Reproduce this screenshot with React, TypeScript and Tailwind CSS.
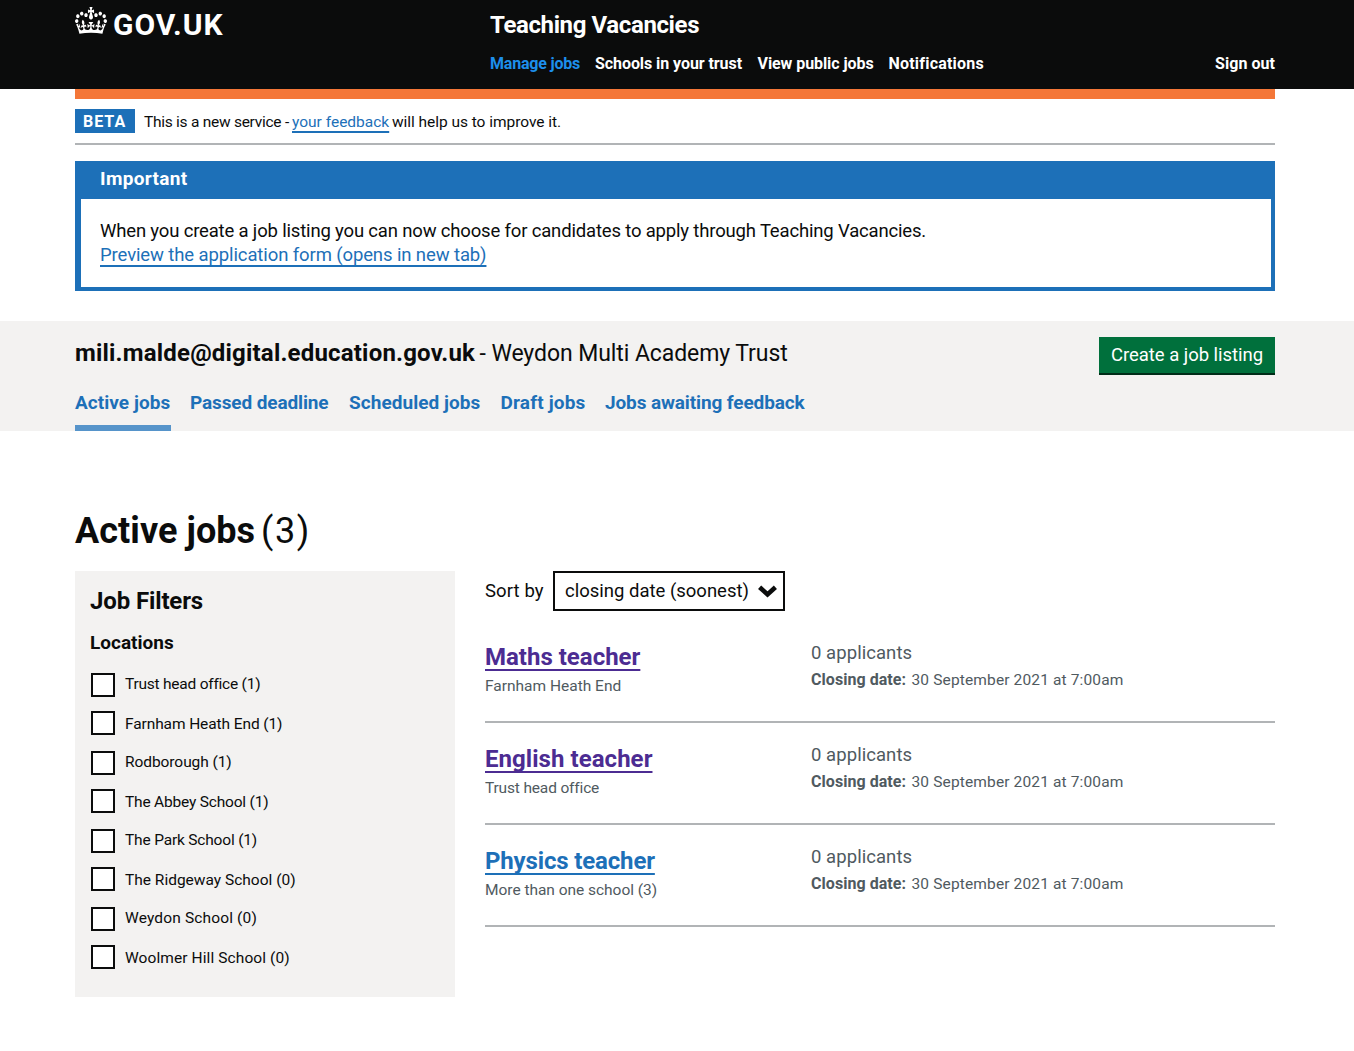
import React from 'react';

const navLinks = [
  { label: 'Manage jobs', cls: 'w-[105px] tracking-[-0.2px] text-[#1d8feb]' },
  { label: 'Schools in your trust', cls: 'w-[162.5px] tracking-[-0.07px]' },
  { label: 'View public jobs', cls: 'w-[131px] tracking-[-0.07px]' },
  { label: 'Notifications', cls: 'w-[110px] tracking-[0.2px]' },
];

const tabs = [
  { label: 'Active jobs', cls: 'w-[96px] mr-[19px] tracking-[0.05px] border-[#5694ca]' },
  { label: 'Passed deadline', cls: 'w-[139px] mr-[20px] tracking-[-0.12px] border-transparent' },
  { label: 'Scheduled jobs', cls: 'w-[132px] mr-[19.5px] tracking-[0.05px] border-transparent' },
  { label: 'Draft jobs', cls: 'w-[85px] mr-[19.5px] tracking-[0.17px] border-transparent' },
  { label: 'Jobs awaiting feedback', cls: 'tracking-[-0.12px] border-transparent' },
];

const locations = [
  { label: 'Trust head office (1)', tracking: 'tracking-[-0.23px]' },
  { label: 'Farnham Heath End (1)', tracking: 'tracking-[-0.1px]' },
  { label: 'Rodborough (1)', tracking: 'tracking-[-0.07px]' },
  { label: 'The Abbey School (1)', tracking: 'tracking-[-0.19px]' },
  { label: 'The Park School (1)', tracking: 'tracking-[-0.18px]' },
  { label: 'The Ridgeway School (0)', tracking: 'tracking-[0px]' },
  { label: 'Weydon School (0)', tracking: 'tracking-[0.15px]' },
  { label: 'Woolmer Hill School (0)', tracking: 'tracking-[0.09px]' },
];

const jobs = [
  { title: 'Maths teacher', place: 'Farnham Heath End', color: 'text-[#4c2c92]', placeTracking: 'tracking-[0px]' },
  { title: 'English teacher', place: 'Trust head office', color: 'text-[#4c2c92] tracking-[0.05px]', placeTracking: 'tracking-[-0.16px]' },
  { title: 'Physics teacher', place: 'More than one school (3)', color: 'text-[#1d70b8] tracking-[-0.15px]', placeTracking: 'tracking-[-0.03px]' },
];

const linkLine = 'underline decoration-2 underline-offset-4 [text-decoration-skip-ink:none]';

function Crown() {
  return (
    <svg className="h-[27px] w-8 shrink-0" viewBox="0 0 132 97" preserveAspectRatio="none" fill="currentColor" aria-hidden="true">
      <path
        fillRule="evenodd"
        d="M25 30.2c3.5 1.5 7.7-.2 9.1-3.7 1.5-3.6-.2-7.8-3.9-9.2-3.6-1.4-7.6.3-9.1 3.9-1.4 3.5.3 7.5 3.9 9zM9 39.5c3.6 1.5 7.8-.2 9.2-3.7 1.5-3.6-.2-7.8-3.9-9.1-3.6-1.5-7.6.2-9.1 3.8-1.4 3.5.3 7.5 3.8 9zM4.4 57.2c3.5 1.5 7.7-.2 9.1-3.8 1.5-3.6-.2-7.7-3.9-9.1-3.5-1.5-7.6.3-9.1 3.8-1.4 3.5.3 7.6 3.9 9.1zm38.3-21.4c3.5 1.5 7.7-.2 9.1-3.8 1.5-3.6-.2-7.7-3.9-9.1-3.6-1.5-7.6.3-9.1 3.8-1.3 3.6.4 7.7 3.9 9.1zm64.4-5.6c-3.6 1.5-7.8-.2-9.1-3.7-1.5-3.6.2-7.8 3.8-9.2 3.6-1.4 7.7.3 9.2 3.9 1.3 3.5-.4 7.5-3.9 9zm15.9 9.3c-3.6 1.5-7.7-.2-9.1-3.7-1.5-3.6.2-7.8 3.7-9.1 3.6-1.5 7.7.2 9.2 3.8 1.5 3.5-.3 7.5-3.8 9zm4.7 17.7c-3.6 1.5-7.8-.2-9.2-3.8-1.5-3.6.2-7.7 3.9-9.1 3.6-1.5 7.7.3 9.2 3.8 1.3 3.5-.4 7.6-3.9 9.1zM89.3 35.8c-3.6 1.5-7.8-.2-9.2-3.8-1.4-3.6.2-7.7 3.9-9.1 3.6-1.5 7.7.3 9.2 3.8 1.4 3.6-.3 7.7-3.9 9.1zM69.7 17.7l8.9 4.7V9.3l-8.9 2.8c-.2-.3-.5-.6-.9-.9L72.4 0H59.6l3.5 11.2c-.3.3-.6.5-.9.9l-8.8-2.8v13.1l8.8-4.7c.3.3.6.7.9.9l-5 15.4v.1c-.2.8-.4 1.6-.4 2.4 0 4.1 3.1 7.5 7 8.1h.2c.3 0 .7.1 1 .1.4 0 .7 0 1-.1h.2c4-.6 7.1-4.1 7.1-8.1 0-.8-.1-1.7-.4-2.4V34l-5.1-15.4c.4-.2.7-.6 1-.9zM66 92.8c16.9 0 32.8 1.1 47.1 3.2 4-16.9 8.9-26.7 14-33.5l-9.6-3.4c1 4.9 1.1 7.2 0 10.2-1.5-1.4-3-4.3-4.2-8.7L108.6 76c2.8-2 5-3.2 7.5-3.3-4.4 9.4-10 11.9-13.6 11.2-4.3-.8-6.3-4.6-5.6-7.9 1-4.7 5.7-5.9 8-.5 4.3-8.7-3-11.4-7.6-8.8 7.1-7.2 7.9-13.5 2.1-21.1-8 6.1-8.1 12.3-4.5 20.8-4.7-5.4-12.1-2.5-9.5 6.2 3.4-5.2 7.9-2 7.2 3.1-.6 4.3-6.4 7.8-13.5 7.2-10.3-.9-10.9-8-11.2-13.8 2.5-.5 7.1 1.8 11 7.3L80.2 60c-4.1 4.4-8 5.3-12.3 5.4 1.4-4.4 8-11.6 8-11.6H55.5s6.4 7.2 7.9 11.6c-4.2-.1-8-1-12.3-5.4l1.4 16.4c3.9-5.5 8.5-7.7 10.9-7.3-.3 5.8-.9 12.8-11.1 13.8-7.2.6-12.9-2.9-13.5-7.2-.7-5 3.8-8.3 7.1-3.1 2.7-8.7-4.6-11.6-9.4-6.2 3.7-8.5 3.6-14.7-4.6-20.8-5.8 7.6-5 13.9 2.2 21.1-4.7-2.6-11.9.1-7.7 8.8 2.3-5.5 7.1-4.2 8.1.5.7 3.3-1.3 7.1-5.7 7.9-3.5.7-9-1.8-13.5-11.2 2.5.1 4.7 1.3 7.5 3.3l-4.7-15.4c-1.2 4.4-2.7 7.2-4.3 8.7-1.1-3-.9-5.3 0-10.2l-9.5 3.4c5 6.9 9.9 16.7 14 33.5 14.8-2.1 30.8-3.2 47.7-3.2z"
      />
    </svg>
  );
}

function Header() {
  return (
    <header className="h-[89px] bg-[#0b0c0c] text-white">
      <div className="ml-[75px] flex w-[1200px]">
        <a className="flex w-[415px] items-start pt-[7px]">
          <Crown />
          <span className="ml-[6px] text-[30px] leading-[35px] font-bold tracking-[0.95px]">GOV.UK</span>
        </a>
        <div className="flex-1 pt-[10px] font-bold">
          <div className="text-[24px] leading-[30px] tracking-[-0.38px]">Teaching Vacancies</div>
          <nav className="mt-[13px] flex text-[16px] leading-[21px] whitespace-nowrap">
            {navLinks.map((l) => (
              <a key={l.label} className={l.cls}>{l.label}</a>
            ))}
            <a className="ml-auto tracking-[0.05px]">Sign out</a>
          </nav>
        </div>
      </div>
    </header>
  );
}

function PhaseBanner() {
  return (
    <div className="flex h-[56px] items-start border-t-10 border-b-2 border-t-[#f47738] border-b-[#b1b4b6] pt-[10px]">
      <strong className="mr-[9px] h-6 w-[60px] bg-[#1d70b8] pl-2 text-[16px] leading-[25px] font-bold tracking-[1px] text-white">BETA</strong>
      <p className="flex text-[15.5px] leading-[26px] whitespace-pre">
        <span className="w-[148px] tracking-[-0.26px]">This is a new service -</span>
        <a className={`mr-[3px] w-[97px] text-[#1d70b8] ${linkLine}`}>your feedback</a>
        <span className="tracking-[-0.04px]">will help us to improve it.</span>
      </p>
    </div>
  );
}

function Notice() {
  return (
    <section className="mt-4 h-[130px] border-r-4 border-b-4 border-l-6 border-[#1d70b8]">
      <h2 className="-mr-1 h-[38px] bg-[#1d70b8] pl-[19px] text-[19px] leading-[35px] font-bold tracking-[0.33px] text-white">Important</h2>
      <div className="pt-[19px] pl-[19px] text-[18.5px] leading-[26px]">
        <p className="h-6 tracking-[-0.17px]">
          When you create a job listing you can now choose for candidates to apply through Teaching Vacancies.
        </p>
        <p className="h-6">
          <a className={`tracking-[-0.11px] text-[#1d70b8] ${linkLine}`}>Preview the application form (opens in new tab)</a>
        </p>
      </div>
    </section>
  );
}

function AccountBar() {
  return (
    <section className="mt-[30px] h-[110px] bg-[#f3f2f1]">
      <div className="ml-[75px] w-[1200px]">
        <div className="flex h-[69px] items-start justify-between pt-4">
          <h1 className="mt-px flex items-start text-[24px] leading-[30px]">
            <b className="w-[404.5px] font-bold tracking-[0.19px]">mili.malde@digital.education.gov.uk</b>
            <span className="text-[23px] leading-[31px] tracking-[-0.08px]">- Weydon Multi Academy Trust</span>
          </h1>
          <button className="h-[38px] w-[176px] border-b-2 border-[#002d18] bg-[#00703c] text-[18.5px] leading-[36px] tracking-[-0.03px] text-white">
            Create a job listing
          </button>
        </div>
        <nav className="flex text-[19px] leading-[25px] font-bold whitespace-nowrap text-[#1d70b8]">
          {tabs.map((t) => (
            <a key={t.label} className={`border-b-6 pb-[10px] ${t.cls}`}>{t.label}</a>
          ))}
        </nav>
      </div>
    </section>
  );
}

function Filters() {
  return (
    <aside className="h-[426px] w-[380px] shrink-0 bg-[#f3f2f1] p-[15px]">
      <h3 className="text-[24px] leading-[30px] font-bold tracking-[-0.13px]">Job Filters</h3>
      <h4 className="mt-[14px] text-[19px] leading-[25px] font-bold">Locations</h4>
      <ul className="mt-[18px] ml-px">
        {locations.map((l) => (
          <li key={l.label} className="group flex h-[39px] items-start">
            <span className="size-6 border-2 border-[#0b0c0c] bg-white group-even:-mt-px" />
            <span className={`ml-[10px] text-[15.5px] leading-[22px] group-even:leading-[24px] ${l.tracking}`}>{l.label}</span>
          </li>
        ))}
      </ul>
    </aside>
  );
}

function JobList() {
  return (
    <div className="w-[790px]">
      <div className="mb-[10px] flex h-10 text-[18.5px] leading-[40px]">
        <span className="w-[68px] tracking-[0.1px]">Sort by</span>
        <div className="flex w-[232px] items-start justify-between border-2 border-[#0b0c0c] pr-[6.5px] pl-[10px] leading-[36px]">
          <span>closing date (soonest)</span>
          <svg className="mt-[12px] h-[13px] w-[19px]" viewBox="0 0 19 13" fill="none" stroke="#0b0c0c" strokeWidth="4.6" aria-hidden="true">
            <path d="M1.6 2.2 9.5 9.4 17.4 2.2" />
          </svg>
        </div>
      </div>
      {jobs.map((j) => (
        <article key={j.title} className="flex h-[102px] border-b-2 border-[#b1b4b6] text-[#505a5f]">
          <div className="w-[326px] pt-[21px]">
            <h3 className="text-[24px] leading-[30px] font-bold">
              <a className={`${j.color} ${linkLine}`}>{j.title}</a>
            </h3>
            <p className={`mt-px text-[15.5px] leading-[26px] ${j.placeTracking}`}>{j.place}</p>
          </div>
          <div className="pt-[19px]">
            <p className="text-[18.5px] leading-[26px] tracking-[0.06px]">0 applicants</p>
            <p className="mt-px flex items-start text-[16px] leading-[25px]">
              <b className="w-[100.5px] font-bold tracking-[0.05px]">Closing date:</b>
              <span className="text-[15.5px] leading-[26px] tracking-[0.14px]">30 September 2021 at 7:00am</span>
            </p>
          </div>
        </article>
      ))}
    </div>
  );
}

export default function App() {
  return (
    <div className="h-[1051px] w-[1354px] overflow-hidden bg-white font-[Roboto,sans-serif] text-[#0b0c0c]">
      <Header />
      <div className="ml-[75px] w-[1200px]">
        <PhaseBanner />
        <Notice />
      </div>
      <AccountBar />
      <main className="mt-20 ml-[75px] w-[1200px]">
        <h2 className="flex text-[36px] leading-[40px] font-bold">
          <span className="w-[186px] tracking-[0.06px]">Active jobs</span>
          <span className="font-normal tracking-[1.6px]">(3)</span>
        </h2>
        <div className="mt-5 flex gap-[30px]">
          <Filters />
          <JobList />
        </div>
      </main>
    </div>
  );
}
